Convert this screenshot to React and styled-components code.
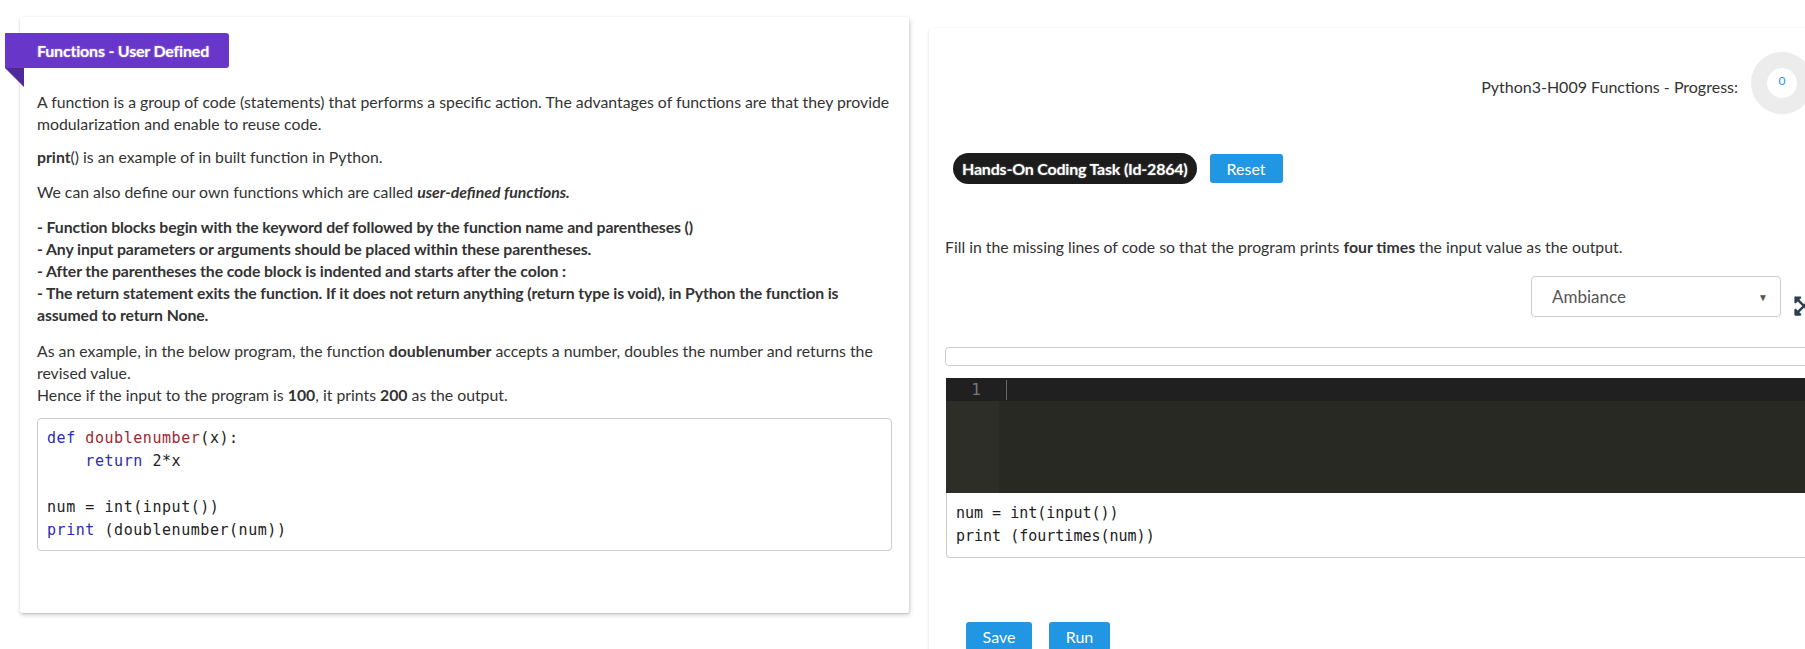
import React from 'react';
import styled, {createGlobalStyle} from 'styled-components';
import {FaExpandArrowsAlt} from 'react-icons/fa';

const GlobalStyle = createGlobalStyle`
html, body {
    margin: 0;
    padding: 0;
    background: #fff;
    overflow: hidden;
}
body {
    font-family: Lato, "Open Sans", sans-serif;
    font-size: 15.8px;
    color: #333;
}
`;

const mono = `"DejaVu Sans Mono", "Liberation Mono", monospace`;

const App = () => {
    return (
        <>
            <GlobalStyle/>
            <Page>
                <LessonCard>
                    <Ribbon>Functions - User Defined</Ribbon>
                    <RibbonFold/>

                    <Para $gap={4}>
                        A function is a group of code (statements) that performs a specific action. The advantages of functions are that they provide modularization and enable to reuse code.
                    </Para>
                    <Para $gap={11}><b>print</b>() is an example of in built function in Python.</Para>
                    <Para $gap={13}>We can also define our own functions which are called <b><i>user-defined functions.</i></b></Para>
                    <Para $gap={13} $bold>
                        - Function blocks begin with the keyword def followed by the function name and parentheses ()<br/>
                        - Any input parameters or arguments should be placed within these parentheses.<br/>
                        - After the parentheses the code block is indented and starts after the colon :<br/>
                        - The return statement exits the function. If it does not return anything (return type is void), in Python the function is assumed to return None.
                    </Para>
                    <Para $gap={14}>
                        As an example, in the below program, the function <b>doublenumber</b> accepts a number, doubles the number and returns the revised value.<br/>
                        Hence if the input to the program is <b>100</b>, it prints <b>200</b> as the output.
                    </Para>

                    <CodeBox>
                        <CodeLine><Kw>def</Kw> <Fn>doublenumber</Fn>(x):</CodeLine>
                        <CodeLine>    <Kw>return</Kw> 2*x</CodeLine>
                        <CodeLine> </CodeLine>
                        <CodeLine>num = int(input())</CodeLine>
                        <CodeLine><Kw>print</Kw> (doublenumber(num))</CodeLine>
                    </CodeBox>
                </LessonCard>

                <TaskCard>
                    <ProgressRow>
                        <ProgressLabel>Python3-H009 Functions - Progress:</ProgressLabel>
                        <ProgressRing><span>0</span></ProgressRing>
                    </ProgressRow>

                    <TaskRow>
                        <TaskBadge>Hands-On Coding Task (Id-2864)</TaskBadge>
                        <BlueButton $w={73}>Reset</BlueButton>
                    </TaskRow>

                    <Instruction>
                        Fill in the missing lines of code so that the program prints <b>four times</b> the input value as the output.
                    </Instruction>

                    <ThemeRow>
                        <ThemeSelect>
                            <span>Ambiance</span>
                            <Caret>▼</Caret>
                        </ThemeSelect>
                        <ExpandIcon><FaExpandArrowsAlt size={22}/></ExpandIcon>
                    </ThemeRow>

                    <ToolBar/>

                    <Editor>
                        <Gutter>
                            <ActiveRow $gutter>1</ActiveRow>
                        </Gutter>
                        <EditArea>
                            <ActiveRow><Cursor/></ActiveRow>
                        </EditArea>
                    </Editor>

                    <FixedCode>
                        <CodeLine>num = int(input())</CodeLine>
                        <CodeLine>print (fourtimes(num))</CodeLine>
                    </FixedCode>

                    <Actions>
                        <BlueButton $w={66}>Save</BlueButton>
                        <BlueButton $w={61}>Run</BlueButton>
                    </Actions>
                </TaskCard>
            </Page>
        </>
    );
};

const Page = styled.div`
display: flex;
align-items: flex-start;
gap: 20px;
padding: 17px 0 0 20px;
width: max-content;
`;

const LessonCard = styled.div`
box-sizing: border-box;
width: 889px;
height: 596px;
padding: 16px 17px;
background: #fff;
border-radius: 2px;
box-shadow: 0 1px 2px rgba(0,0,0,0.12), 1px 2px 5px rgba(0,0,0,0.18);
display: flex;
flex-direction: column;
`;

const Ribbon = styled.div`
align-self: flex-start;
box-sizing: border-box;
margin-left: -32px;
width: 224px;
height: 35px;
padding-left: 32px;
display: flex;
align-items: center;
background: #6836c8;
border-radius: 0 3px 3px 0;
color: #fff;
font-weight: 700;
font-size: 16px;
letter-spacing: -0.2px;
text-shadow: 0 0 2px rgba(255,255,255,0.5);
`;

const RibbonFold = styled.div`
margin-left: -32px;
width: 0;
height: 0;
border-top: 19px solid #4f2899;
border-left: 19px solid transparent;
`;

const Para = styled.div`
margin-top: ${p => p.$gap}px;
line-height: 22px;
font-weight: ${p => p.$bold ? 700 : 400};
letter-spacing: ${p => p.$bold ? '-0.1px' : '0'};
`;

const CodeBox = styled.div`
margin-top: 12px;
border: 1px solid #ccc;
border-radius: 4px;
padding: 8px 9px;
font-family: ${mono};
font-size: 15px;
letter-spacing: 0.55px;
line-height: 23px;
color: #222;
`;

const CodeLine = styled.div`
white-space: pre;
height: 23px;
`;

const Kw = styled.span`
color: #2b2bb5;
`;

const Fn = styled.span`
color: #a3262f;
`;

const TaskCard = styled.div`
box-sizing: border-box;
margin-top: 11px;
width: 905px;
min-height: 700px;
padding: 24px 16px 0 16px;
background: #fff;
border-radius: 3px;
box-shadow: 0 1px 3px rgba(0,0,0,0.15);
display: flex;
flex-direction: column;
`;

const ProgressRow = styled.div`
display: flex;
justify-content: flex-end;
align-items: center;
gap: 13px;
padding-right: 5px;
`;

const ProgressLabel = styled.span`
margin-top: 6px;
font-size: 16px;
`;

const ProgressRing = styled.div`
box-sizing: border-box;
width: 62px;
height: 62px;
border-radius: 50%;
border: 16px solid #ececec;
background: #fff;
display: flex;
align-items: center;
justify-content: center;

span {
    margin-top: -6px;
    font-size: 12px;
    color: #2196f3;
}
`;

const TaskRow = styled.div`
margin-top: 39px;
padding-left: 8px;
display: flex;
align-items: center;
gap: 13px;
`;

const TaskBadge = styled.span`
height: 31px;
padding: 0 9px;
display: inline-flex;
align-items: center;
border-radius: 16px;
background: #1c1c1c;
color: #fff;
font-weight: 700;
font-size: 16px;
letter-spacing: -0.2px;
text-shadow: 0 0 2px rgba(255,255,255,0.4);
`;

const BlueButton = styled.button`
box-sizing: border-box;
width: ${p => p.$w}px;
height: 29px;
padding: 0;
border: none;
border-radius: 3px;
background: #2196e3;
color: #fff;
font-family: Lato, sans-serif;
font-size: 16px;
cursor: pointer;
`;

const Instruction = styled.div`
margin-top: 52px;
line-height: 22px;
`;

const ThemeRow = styled.div`
margin-top: 18px;
display: flex;
justify-content: flex-end;
align-items: flex-end;
gap: 12px;
padding-right: 3px;
`;

const ThemeSelect = styled.div`
box-sizing: border-box;
width: 250px;
height: 41px;
padding: 0 12px 0 20px;
border: 1px solid #ccc;
border-radius: 4px;
display: flex;
align-items: center;
justify-content: space-between;
font-size: 17px;
color: #555;
`;

const Caret = styled.span`
font-size: 10px;
color: #555;
`;

const ExpandIcon = styled.span`
display: flex;
color: #2c3e50;
`;

const ToolBar = styled.div`
margin-top: 30px;
height: 19px;
box-sizing: border-box;
border: 1px solid #ccc;
border-radius: 4px;
`;

const Editor = styled.div`
margin: 12px 0 0 1px;
height: 115px;
display: flex;
`;

const Gutter = styled.div`
width: 53px;
background: #2e2e29;
`;

const EditArea = styled.div`
flex: 1;
background: #292924;
`;

const ActiveRow = styled.div`
height: 23px;
background: #202020;
box-sizing: border-box;
display: flex;
align-items: center;
justify-content: ${p => p.$gutter ? 'flex-end' : 'flex-start'};
padding: ${p => p.$gutter ? '0 18px 0 0' : '0 0 0 7px'};
font-family: ${mono};
font-size: 16px;
color: #777;
`;

const Cursor = styled.span`
width: 1px;
height: 20px;
background: #6a6a6a;
`;

const FixedCode = styled.div`
margin-left: 1px;
padding: 9px 9px;
border: 1px solid #ccc;
border-top: none;
border-radius: 0 0 0 4px;
font-family: ${mono};
font-size: 15px;
line-height: 23px;
color: #222;
`;

const Actions = styled.div`
margin-top: 64px;
padding-left: 21px;
display: flex;
gap: 17px;
`;

export default App;
